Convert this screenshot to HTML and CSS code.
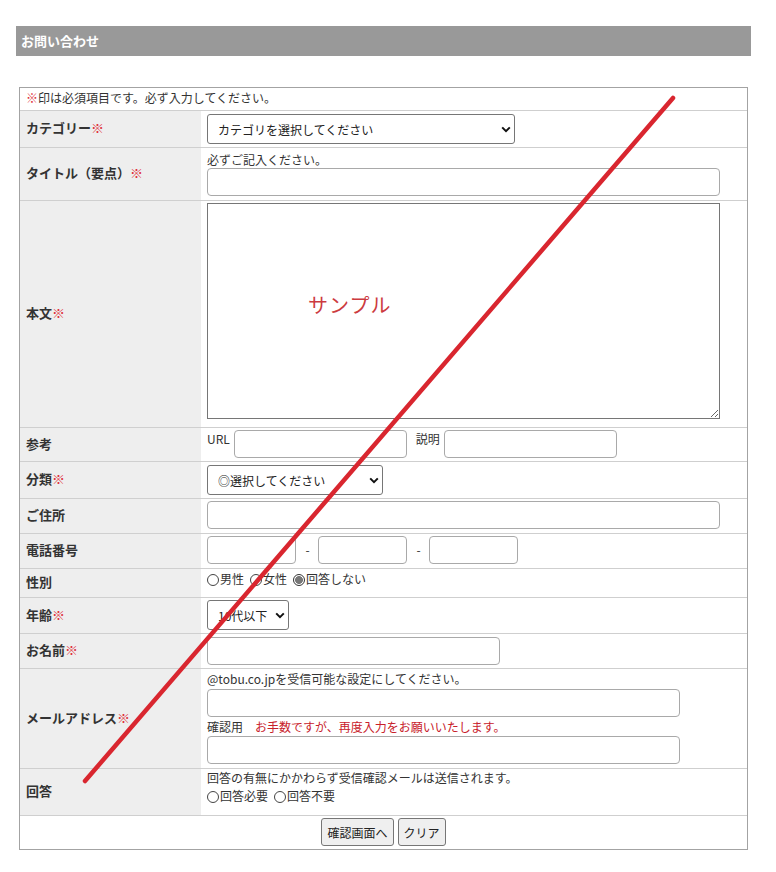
FILE: index.html
```html
<!DOCTYPE html>
<html lang="ja">
<head>
<meta charset="utf-8">
<title>お問い合わせ</title>
<link rel="stylesheet" href="styles.css">
</head>
<body>
<div class="page">
  <h2 class="page-title">お問い合わせ</h2>
  <form class="form">
    <table class="form-table">
      <colgroup><col class="col-label"><col class="col-value"></colgroup>
      <tr class="row-notice">
        <td colspan="2"><span class="req">※</span>印は必須項目です。必ず入力してください。</td>
      </tr>
      <tr class="row-category">
        <th>カテゴリー<span class="req">※</span></th>
        <td><select class="sel sel-category"><option>カテゴリを選択してください</option></select></td>
      </tr>
      <tr class="row-title">
        <th>タイトル（要点）<span class="req">※</span></th>
        <td><div class="hint">必ずご記入ください。</div><input class="txt txt-full" type="text"></td>
      </tr>
      <tr class="row-body">
        <th>本文<span class="req">※</span></th>
        <td class="body-cell"><textarea class="area"></textarea><span class="sample">サンプル</span></td>
      </tr>
      <tr class="row-ref">
        <th>参考</th>
        <td><span class="inline-label">URL</span><input class="txt txt-ref" type="text"><span class="inline-label inline-gap">説明</span><input class="txt txt-ref" type="text"></td>
      </tr>
      <tr class="row-cls">
        <th>分類<span class="req">※</span></th>
        <td><select class="sel sel-cls"><option>◎選択してください</option></select></td>
      </tr>
      <tr class="row-addr">
        <th>ご住所</th>
        <td><input class="txt txt-full" type="text"></td>
      </tr>
      <tr class="row-tel">
        <th>電話番号</th>
        <td><input class="txt txt-tel" type="text"><span class="dash">-</span><input class="txt txt-tel" type="text"><span class="dash">-</span><input class="txt txt-tel" type="text"></td>
      </tr>
      <tr class="row-sex">
        <th>性別</th>
        <td><label class="opt"><input class="radio" type="radio" name="sex">男性</label><label class="opt"><input class="radio" type="radio" name="sex">女性</label><label class="opt"><input class="radio" type="radio" name="sex" checked>回答しない</label></td>
      </tr>
      <tr class="row-age">
        <th>年齢<span class="req">※</span></th>
        <td><select class="sel sel-age"><option>10代以下</option></select></td>
      </tr>
      <tr class="row-name">
        <th>お名前<span class="req">※</span></th>
        <td><input class="txt txt-name" type="text"></td>
      </tr>
      <tr class="row-mail">
        <th>メールアドレス<span class="req">※</span></th>
        <td>
          <div class="hint">@tobu.co.jpを受信可能な設定にしてください。</div>
          <input class="txt txt-mail" type="text">
          <div class="hint hint-confirm">確認用<span class="warn">お手数ですが、再度入力をお願いいたします。</span></div>
          <input class="txt txt-mail" type="text">
        </td>
      </tr>
      <tr class="row-answer">
        <th>回答</th>
        <td>
          <div class="hint">回答の有無にかかわらず受信確認メールは送信されます。</div>
          <div class="hint"><label class="opt"><input class="radio" type="radio" name="ans">回答必要</label><label class="opt"><input class="radio" type="radio" name="ans">回答不要</label></div>
        </td>
      </tr>
      <tr class="row-buttons">
        <td colspan="2"><div class="buttons"><button type="button" class="btn">確認画面へ</button><button type="button" class="btn">クリア</button></div></td>
      </tr>
    </table>
  </form>
  <svg class="slash" width="776" height="872" viewBox="0 0 776 872"><line x1="673" y1="98" x2="85" y2="781" stroke="#d9262f" stroke-width="4.5" stroke-linecap="round"/></svg>
</div>
</body>
</html>
```

FILE: styles.css
```css
* { box-sizing: border-box; }
html, body { margin: 0; padding: 0; background: #fff; }
body {
  font-family: "Noto Sans CJK JP", "Noto Sans", sans-serif;
  font-size: 12px;
  line-height: 18px;
  color: #333;
}
.page {
  position: relative;
  width: 776px;
  height: 872px;
  padding: 26px 0 0 16px;
}
.page-title {
  margin: 0;
  width: 735px;
  height: 30px;
  background: #999;
  color: #fff;
  font-size: 13px;
  font-weight: bold;
  line-height: 29px;
  padding-left: 5px;
}
.form { margin: 31px 0 0 3px; }
.form-table {
  width: 729px;
  table-layout: fixed;
  border-collapse: separate;
  border-spacing: 0;
  border: 1px solid #a3a3a3;
}
.col-label { width: 181px; }
.form-table th,
.form-table td {
  border-top: 1px solid #cfcfcf;
  padding: 2px 6px;
}
.form-table tr:first-child td { border-top: none; }
.form-table th {
  background: #eee;
  text-align: left;
  font-size: 13px;
  font-weight: bold;
  vertical-align: middle;
  padding: 4px 6px 6px;
  color: #333;
}
.form-table td { vertical-align: top; }
.req { color: #e0303a; font-weight: normal; }
.hint { line-height: 18px; }
.warn { color: #c8202a; margin-left: 12px; }

/* row paddings */
.row-notice td { padding: 1px 6px 3px; }
.row-category td { padding: 3px 6px 3px; }
.row-title td { padding: 3px 6px 4px; }
.row-title .hint { line-height: 17px; }
.row-body td { padding: 2px 6px 9px; }
.row-ref td { padding: 2px 6px 3px; }
.row-cls td { padding: 3px 6px 3px; }
.row-addr td, .row-tel td { padding: 2px 6px 4px; }
.row-sex td { padding: 1px 6px 0; }
.row-age td { padding: 2px 6px 3px; }
.row-name td { padding: 3px 6px 3px; }
.row-mail td { padding: 1px 6px 4px; }
.row-mail .hint-confirm { line-height: 19px; }
.row-answer td { padding: 0 6px 10px; }
.row-buttons td { padding: 2px 6px 3px; }

/* controls */
.txt {
  display: inline-block;
  vertical-align: top;
  height: 28px;
  margin: 0;
  border: 1px solid #a9a9a9;
  border-radius: 4px;
  padding: 0 4px;
  font: inherit;
  background: #fff;
}
.txt-full { width: 513px; display: block; }
.txt-ref { width: 173px; }
.txt-tel { width: 89px; }
.txt-name { width: 293px; display: block; }
.txt-mail { width: 473px; display: block; }
.row-mail .txt-mail:first-of-type { margin-top: 1px; }
.area {
  display: block;
  width: 513px;
  height: 216px;
  margin: 0;
  border: 1px solid #767676;
  border-radius: 0;
  resize: both;
  font: inherit;
}
.row-body td { padding-bottom: 8px; }
.body-cell { position: relative; }
.sample {
  position: absolute;
  left: 107px;
  top: 92px;
  font-size: 20px;
  line-height: 24px;
  color: #cc3a40;
  letter-spacing: 1px;
}
.sel {
  display: block;
  height: 30px;
  margin: 0;
  appearance: none;
  -webkit-appearance: none;
  border: 1px solid #767676;
  border-radius: 3px;
  padding: 0 20px 0 10px;
  font-family: inherit;
  font-size: 12px;
  color: #222;
  background: #fff url("data:image/svg+xml,%3Csvg xmlns='http://www.w3.org/2000/svg' width='10' height='7' viewBox='0 0 10 7'%3E%3Cpath d='M1.2 1.4 5 5.2 8.8 1.4' fill='none' stroke='%23111' stroke-width='2'/%3E%3C/svg%3E") no-repeat right 3px center;
}
.sel-category { width: 308px; }
.sel-cls { width: 176px; }
.sel-age { width: 82px; }
.inline-label { display: inline-block; vertical-align: top; margin-right: 4px; }
.inline-gap { margin-left: 9px; }
.dash { display: inline-block; vertical-align: top; line-height: 28px; width: 23px; text-align: center; }
.dash + .txt { margin-left: -1px; }

.opt { display: inline-block; margin-right: 6px; }
.radio {
  appearance: none;
  -webkit-appearance: none;
  width: 12px;
  height: 12px;
  margin: 0 1px 0 0;
  border: 1px solid #444;
  border-radius: 50%;
  background: #fff;
  vertical-align: -2px;
}
.radio:checked {
  border-color: #333;
  background: radial-gradient(circle, #777 0, #777 3.6px, #fff 4.3px);
}

.buttons { display: flex; justify-content: center; gap: 4px; }
.btn {
  height: 28px;
  margin: 0;
  padding: 0 5px;
  border: 1px solid #767676;
  border-radius: 3px;
  background: #efefef;
  font-family: inherit;
  font-size: 12px;
  color: #222;
}
.slash {
  position: absolute;
  left: 0;
  top: 0;
  pointer-events: none;
}
```
